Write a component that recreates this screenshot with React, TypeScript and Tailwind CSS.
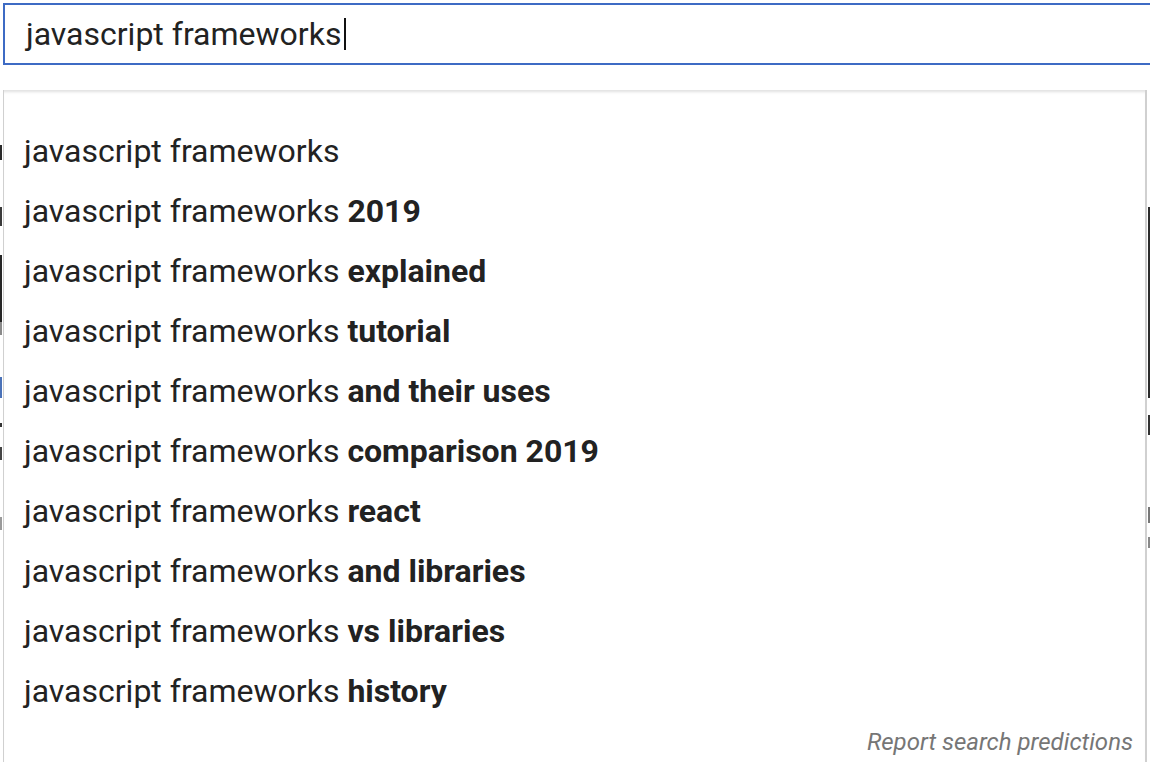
import React from "react";

const query = "javascript frameworks";

const suggestions: string[] = [
  "",
  "2019",
  "explained",
  "tutorial",
  "and their uses",
  "comparison 2019",
  "react",
  "and libraries",
  "vs libraries",
  "history",
];

function SideStrip({ side }: { side: "left" | "right" }) {
  // bits of the page that peek out from behind the dropdown
  if (side === "left") {
    return (
      <div className="flex w-[3px] flex-col">
        <div className="h-[55px]" />
        <div className="h-[15px] w-[2px] bg-[#2a2a2a]" />
        <div className="h-[47px]" />
        <div className="h-[19px] w-[2px] bg-[#3a3a3a]" />
        <div className="h-[29px]" />
        <div className="h-[67px] w-[2px] bg-[#262626]" />
        <div className="h-[13px] w-[2px] bg-[#8a8a8a]" />
        <div className="h-[42px]" />
        <div className="h-[21px] w-[2px] bg-[#4a72b8]" />
        <div className="h-[25px]" />
        <div className="h-[4px] w-[2px] bg-[#333]" />
        <div className="h-[20px]" />
        <div className="h-[13px] w-[2px] bg-[#444]" />
        <div className="h-[57px]" />
        <div className="h-[13px] w-[2px] bg-[#9a9a9a]" />
      </div>
    );
  }
  return (
    <div className="flex w-[3px] flex-col items-end">
      <div className="h-[117px]" />
      <div className="h-[191px] w-[2px] bg-[#2b2b2b]" />
      <div className="h-[17px]" />
      <div className="h-[20px] w-[2px] bg-[#333]" />
      <div className="h-[72px]" />
      <div className="h-[16px] w-[2px] bg-[#777]" />
      <div className="h-[14px]" />
      <div className="h-[11px] w-[2px] bg-[#888]" />
    </div>
  );
}

function App() {
  return (
    <div
      className="h-[762px] w-[1150px] overflow-hidden bg-white text-[#222]"
      style={{ fontFamily: "Roboto, 'Liberation Sans', sans-serif" }}
    >
      {/* search box */}
      <div className="ml-[3px] mt-[3px] flex h-[62px] w-[1150px] items-center border-2 border-r-0 border-[#3d6bc4] pl-[21px]">
        <span className="text-[32px] leading-none">{query}</span>
        <span className="ml-[3px] h-[32px] w-[2px] bg-[#111]" />
      </div>

      <div className="mt-[25px] flex">
        <SideStrip side="left" />

        {/* dropdown */}
        <div className="relative h-[680px] flex-1 border-l border-r-2 border-[#d0d0d0] bg-white shadow-[inset_0_4px_3px_-2px_rgba(0,0,0,0.12)]">
          <ul className="flex flex-col pt-[31px]">
            {suggestions.map((s, i) => (
              <li key={i} className="flex h-[60px] items-center pl-[20px] text-[32px]">
                <span>
                  {query}
                  {s && <b className="font-bold"> {s}</b>}
                </span>
              </li>
            ))}
          </ul>
          <div className="flex justify-end pr-[12px] pt-[3px]">
            <span className="text-[24px] italic text-[#767676]">Report search predictions</span>
          </div>
        </div>

        <SideStrip side="right" />
      </div>
    </div>
  );
}

export default App;
